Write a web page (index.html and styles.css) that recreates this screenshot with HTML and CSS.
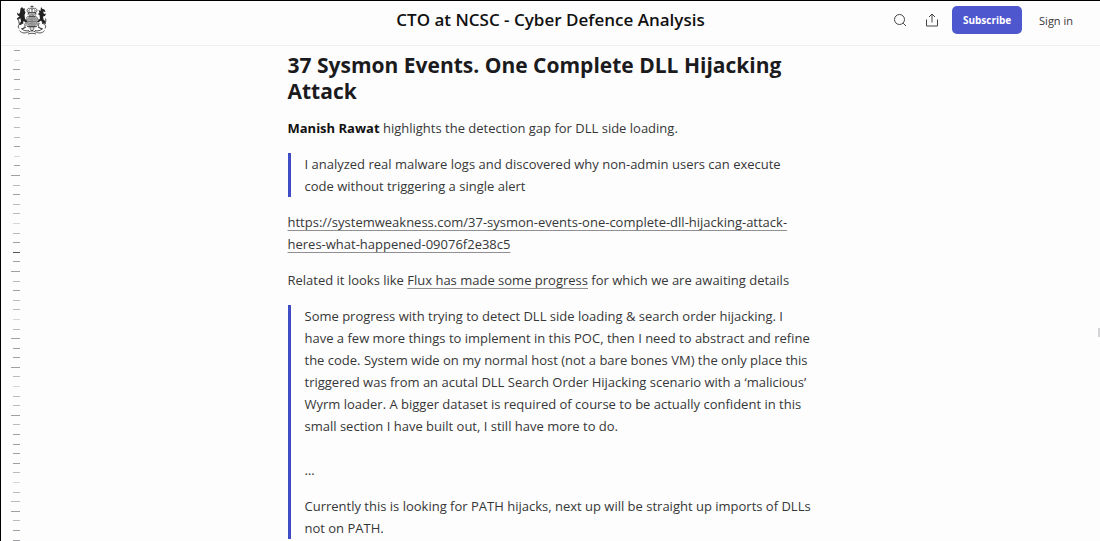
FILE: index.html
```html
<!DOCTYPE html>
<html lang="en">
<head>
<meta charset="utf-8">
<meta name="viewport" content="width=device-width, initial-scale=1">
<title>CTO at NCSC - Cyber Defence Analysis</title>
<link rel="stylesheet" href="styles.css">
</head>
<body>
<header class="topbar">
  <a class="crest" href="#" aria-label="Home">
    <svg viewBox="0 0 60 60" width="30" height="30" aria-hidden="true">
      <g fill="none" stroke="#444" stroke-width="1.8">
        <path d="M30 1v5M27 3h6M22 15c-5-6 1-11 8-7 7-4 13 1 8 7zM30 8v7M25 9c-2 2-1 4 0 6M35 9c2 2 1 4 0 6"/>
        <path d="M21 18h18M23 15v3M37 15v3"/>
        <circle cx="30" cy="33" r="12.500" stroke="#666" stroke-width="3" stroke-dasharray="2 1"/>
        <circle cx="30" cy="33" r="10" stroke="#777" fill="#aaa"/>
        <path stroke="#777" d="M30 25v16M22 33h16M25 28l3 2M33 29l3-1M25 37l3 1M33 38l3-1"/>
        <path d="M5 51c5 7 13 5 18 3 5-3 9-3 14 0 5 2 13 4 18-3M8 47c5 4 11 6 16 4M52 47c-5 4-11 6-16 4M22 58c5-2 11-2 16 0"/>
        <path d="M23 23h14M21 43h18M26 47l4 5 4-5"/>
      </g>
      <g fill="#222">
        <path d="M7 7l3-3 2 3 4 0-1 4 2 4-2 5 1 8 5 5-3 2-5-3-1 5-5 3-4-1 5-6-1-6-5 1-3 4 0-5 6-4-4-3-1-5 4 3 2-3z"/>
        <path d="M48 4l3 4 4 1 2 5-5-1 2 5 4-1-2 5-4 1 1 6 4 4 0 5-6-2-3-5-4 3-4 0 6-7-1-7-4-2 4-2-2-6 4 2z"/>
      </g>
      <g fill="none" stroke="#444" stroke-width="2">
        <path d="M9 37c-6 1-8 6-5 10M14 37c4 3 2 9-4 11M4 25c-3 5 1 8 0 12M18 44c-3 2-5 3-8 3"/>
        <path d="M50 37c7 0 9 6 6 10M45 37c-4 3-2 9 5 11M57 27c2 4-1 7 0 10M42 44c3 2 5 3 8 3"/>
      </g>
    </svg>
  </a>
  <h1 class="site-title">CTO at NCSC - Cyber Defence Analysis</h1>
  <div class="actions">
    <button class="icon-button" type="button" aria-label="Search">
      <svg viewBox="0 0 14 14" width="14" height="14" aria-hidden="true"><circle cx="6.500" cy="6.500" r="5"/><path d="M10.200 10.200L13 13"/></svg>
    </button>
    <button class="icon-button" type="button" aria-label="Share">
      <svg viewBox="0 0 14 14" width="14" height="14" aria-hidden="true"><path d="M7 9.500V1M4 4l3-3 3 3M1.500 6.500v6.500h11V6.500"/></svg>
    </button>
    <button class="subscribe" type="button">Subscribe</button>
    <button class="sign-in" type="button">Sign in</button>
  </div>
</header>
<div class="page">
  <aside class="rail" aria-hidden="true">
    <i class="s dark"></i><i class="s light"></i><i class="dark"></i><i class="s dark"></i><i class="s"></i><i class="dark"></i><i></i><i class="s"></i><i class="s"></i><i class="s"></i><i class="s dark"></i><i class="s light"></i><i class="s dark"></i>
    <i class="l dark"></i><i></i><i class="dark"></i><i></i><i></i><i class="light"></i><i></i><i class="dark"></i><i class="current"></i><i class="dark"></i><i class="l dark"></i><i></i><i class="dark"></i>
    <i></i><i></i><i class="light"></i><i></i><i class="l dark"></i><i class="dark"></i><i class="dark"></i><i class="l dark"></i><i></i><i class="light"></i><i></i><i></i><i class="l dark"></i>
    <i></i><i class="dark"></i><i class="dark"></i><i class="dark"></i><i class="dark"></i><i></i><i class="light"></i><i></i><i class="l"></i><i class="l dark"></i><i></i><i class="dark"></i><i class="dark"></i>
  </aside>
  <main class="article">
    <h2>37 Sysmon Events. One Complete DLL Hijacking Attack</h2>
    <p><strong>Manish Rawat</strong> highlights the detection gap for DLL side loading.</p>
    <blockquote>
      <p>I analyzed real malware logs and discovered why non-admin users can execute code without triggering a single alert</p>
    </blockquote>
    <p><a href="#">https://systemweakness.com/37-sysmon-events-one-complete-dll-hijacking-attack-heres-what-happened-09076f2e38c5</a></p>
    <p>Related it looks like <a href="#">Flux has made some progress</a> for which we are awaiting details</p>
    <blockquote>
      <p>Some progress with trying to detect DLL side loading &amp; search order hijacking. I have a few more things to implement in this POC, then I need to abstract and refine the code. System wide on my normal host (not a bare bones VM) the only place this triggered was from an acutal DLL Search Order Hijacking scenario with a ‘malicious’ Wyrm loader. A bigger dataset is required of course to be actually confident in this small section I have built out, I still have more to do.<br><br>…</p>
      <p>Currently this is looking for PATH hijacks, next up will be straight up imports of DLLs not on PATH.</p>
    </blockquote>
  </main>
  <div class="edge"><span class="handle"></span></div>
</div>
</body>
</html>
```
FILE: styles.css
```css
* { box-sizing: border-box; }

body {
  margin: 0;
  height: 100vh;
  display: flex;
  flex-direction: column;
  overflow: hidden;
  border-top: 1px solid #000;
  border-left: 1px solid #000;
  background: #fefdfe;
  color: #363737;
  font-family: "Open Sans", "Noto Sans", sans-serif;
  font-size: 13px;
  line-height: 22px;
}

.topbar {
  flex: none;
  display: grid;
  grid-template-columns: 1fr auto 1fr;
  align-items: center;
  height: 45px;
  padding: 0 16px 6px;
  border-bottom: 1px solid #eeeeef;
}

.crest { display: flex; }

.site-title {
  margin: 0;
  color: #111;
  font-size: 17px;
  font-weight: 600;
}

.actions {
  display: flex;
  align-items: center;
  justify-content: flex-end;
}

button {
  border: 0;
  padding: 0;
  background: none;
  font-family: inherit;
  font-size: 11px;
  cursor: pointer;
}

.icon-button {
  display: flex;
  justify-content: center;
  width: 32px;
}

.icon-button svg {
  fill: none;
  stroke: #444;
  stroke-width: 1;
}

.subscribe {
  width: 70px;
  height: 28px;
  margin-left: 4px;
  border-radius: 5px;
  background: #4f57cf;
  color: #fff;
  font-size: 10px;
  font-weight: 700;
}

.sign-in {
  height: 28px;
  padding: 0 11px 0 17px;
  color: #363737;
}

.page {
  flex: 1;
  min-height: 0;
  display: grid;
  grid-template-columns: 139px 1fr 141px;
  grid-template-rows: minmax(0, 1fr);
}

.rail {
  display: flex;
  flex-direction: column;
  width: 19px;
  margin-bottom: -4px;
}

.rail i {
  flex: 1;
  align-self: flex-end;
  width: 7px;
  background: linear-gradient(#bcbabd, #bcbabd) center / 100% 1px no-repeat;
}

.rail .s { width: 6px; }
.rail .l { width: 9px; }
.rail .dark { background-image: linear-gradient(#a19fa3, #a19fa3); }
.rail .light { background-image: linear-gradient(#d8d6d9, #d8d6d9); }
.rail .current { background-image: linear-gradient(#555, #555); }

.article {
  width: 100%;
  max-width: 524px;
  margin: 0 auto;
  padding-top: 6px;
}

.article h2 {
  margin: 0 0 13px;
  color: #1b1b1d;
  font-size: 21px;
  font-weight: 700;
  line-height: 26px;
}

.article p { margin: 0 0 14px; }
.article strong { color: #111; }

.article blockquote {
  margin: 0 0 14px;
  padding-left: 14px;
  border-left: 3px solid #3f4cc4;
}

.article blockquote p:last-child { margin-bottom: 0; }

.article a {
  color: inherit;
  text-decoration: underline;
  text-decoration-color: #918f93;
  text-decoration-thickness: 1px;
  text-decoration-skip-ink: none;
  text-underline-offset: 3px;
}

.edge {
  display: flex;
  align-items: center;
  justify-content: flex-end;
  padding-top: 78px;
}

.handle {
  width: 2px;
  height: 9px;
  background: #d5d5d7;
}
```
